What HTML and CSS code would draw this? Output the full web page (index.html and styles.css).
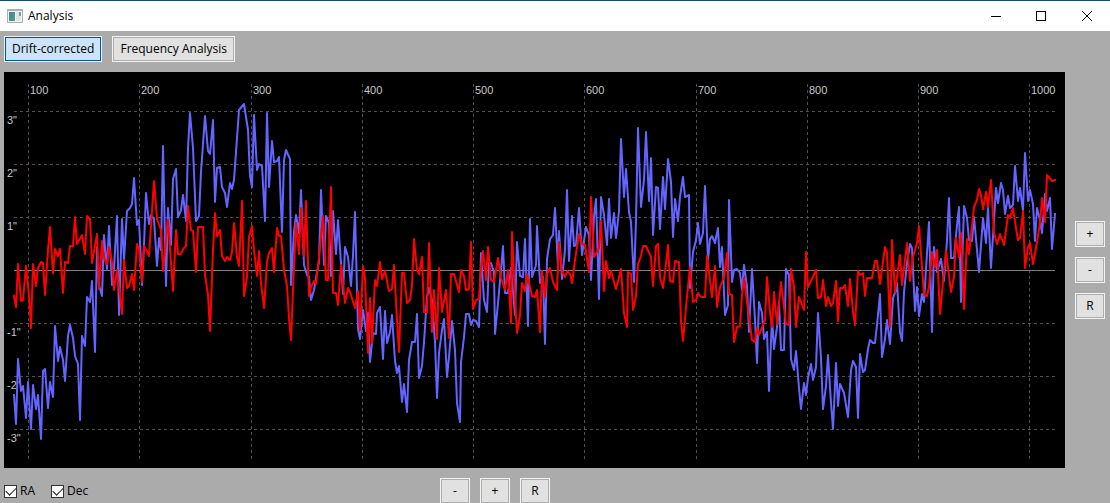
FILE: index.html
```html
<!DOCTYPE html>
<html lang="en">
<head>
<meta charset="utf-8">
<title>Analysis</title>
<link rel="stylesheet" href="styles.css">
</head>
<body>
<header class="titlebar">
  <svg class="app-icon" width="16" height="14" viewBox="0 0 16 14" shape-rendering="crispEdges" aria-hidden="true">
    <defs><linearGradient id="pane" x1="0" y1="0" x2="1" y2="1"><stop offset="0" stop-color="#4a7fb0"/><stop offset="1" stop-color="#4fa36b"/></linearGradient></defs>
    <rect x="0" y="0" width="16" height="14" fill="#a9b0b5"/>
    <rect x="1" y="2" width="14" height="11" fill="#f2f3f4"/>
    <rect x="2" y="3" width="6" height="9" fill="url(#pane)"/>
    <rect x="9" y="3" width="3" height="9" fill="#e0e2e5"/>
    <rect x="12" y="3" width="2" height="4" fill="#6aa58c"/>
    <rect x="12" y="7" width="2" height="5" fill="#dfe4e6"/>
  </svg>
  <h1 class="title">Analysis</h1>
  <div class="window-controls">
    <button class="win-btn" aria-label="Minimize"><svg width="12" height="12" viewBox="0 0 12 12" shape-rendering="crispEdges"><path d="M2 6.5h10"/></svg></button>
    <button class="win-btn" aria-label="Maximize"><svg width="12" height="12" viewBox="0 0 12 12" shape-rendering="crispEdges"><path d="M1.5 1.5h9v9h-9z"/></svg></button>
    <button class="win-btn" aria-label="Close"><svg width="12" height="12" viewBox="0 0 12 12"><path d="M1 1l10 10M11 1L1 11"/></svg></button>
  </div>
</header>
<nav class="modes">
  <button class="btn mode selected" aria-pressed="true">Drift-corrected</button>
  <button class="btn mode" aria-pressed="false">Frequency Analysis</button>
</nav>
<main class="workspace">
  <svg class="plot" viewBox="4 72 1061 396" role="img" aria-label="RA and Dec drift in arc-seconds">
    <path class="grid" d="M14 111.5H1055M14 164.5H1055M14 217.5H1055M14 323.5H1055M14 376.5H1055M14 429.5H1055"/>
    <path class="grid" d="M28.5 84V459M139.5 84V459M251.5 84V459M362.5 84V459M473.5 84V459M584.5 84V459M696.5 84V459M807.5 84V459M918.5 84V459M1029.5 84V459"/>
    <path class="axis" d="M14 270.5H1055"/>
    <g class="labels">
      <text x="30" y="94">100</text><text x="141" y="94">200</text><text x="253" y="94">300</text><text x="364" y="94">400</text><text x="475" y="94">500</text><text x="586" y="94">600</text><text x="698" y="94">700</text><text x="809" y="94">800</text><text x="920" y="94">900</text><text x="1031" y="94">1000</text>
      <text x="7" y="124">3"</text><text x="7" y="177">2"</text><text x="7" y="230">1"</text><text x="7" y="336">-1"</text><text x="7" y="389">-2"</text><text x="7" y="442">-3"</text>
    </g>
    <polyline class="trace ra" points="14,395 16,424 18,359 21,391 23,386 26,418 28,382 31,429 33,385 36,409 38,395 41,439 43,371 45,369 48,408 50,382 53,397 55,326 58,361 60,347 63,360 65,381 68,336 70,325 73,338 75,356 78,364 80,420 82,336 85,346 87,297 90,302 92,281 95,352 97,247 99,285 102,296 104,235 107,269 109,226 112,285 114,268 117,216 119,315 122,219 124,260 127,211 130,208 132,204 134,178 137,225 139,220 142,285 144,245 146,193 149,224 151,215 154,219 157,266 159,238 161,250 163,146 166,286 168,208 171,245 173,179 176,169 178,217 181,210 183,195 186,221 188,148 190,113 193,148 196,221 199,216 201,172 205,116 208,151 210,154 213,120 215,202 217,168 220,167 222,187 225,193 227,207 230,183 232,189 234,180 239,110 244,104 248,130 250,176 252,187 254,115 257,170 259,164 262,166 265,221 267,113 269,187 272,141 274,162 277,161 279,157 282,232 284,160 286,150 290,159 291,285 294,232 296,215 299,233 301,190 304,265 307,275 309,277 311,300 314,290 317,272 319,262 321,190 324,265 326,216 329,223 331,276 333,211 336,254 338,220 341,263 343,294 345,247 348,257 351,286 353,255 355,212 358,329 360,339 363,310 366,331 368,313 370,362 373,333 376,334 377,313 380,307 383,359 385,311 387,343 390,332 392,315 395,361 397,373 399,366 402,402 404,384 407,412 409,360 412,342 415,342 417,314 419,378 422,366 424,342 427,297 429,288 432,300 435,342 437,398 439,353 442,330 444,319 447,377 449,357 452,321 455,350 457,403 460,422 461,362 464,337 466,314 469,314 471,325 473,320 476,321 479,327 481,253 484,300 487,312 489,263 491,263 494,272 495,334 498,303 501,270 503,246 505,293 508,293 511,268 515,315 517,242 520,276 523,277 525,239 528,326 530,219 532,277 536,265 537,226 540,283 543,277 545,344 547,259 550,239 553,235 555,208 558,267 559,231 562,279 565,250 567,190 569,261 572,216 574,246 576,245 579,208 582,255 586,227 589,235 591,280 594,217 596,199 599,299 601,197 604,215 607,245 609,199 611,238 614,213 616,238 619,211 621,139 624,197 626,169 629,212 631,222 634,282 636,220 638,128 641,207 644,180 646,132 649,201 651,158 653,235 656,187 658,188 660,229 663,177 665,209 668,159 671,182 673,237 675,199 678,221 680,197 683,177 685,197 689,195 690,288 693,252 696,240 698,223 700,244 703,233 705,186 708,260 710,239 712,236 715,243 718,228 720,267 722,247 725,315 728,305 729,200 732,282 734,270 737,269 740,273 742,290 744,265 747,287 749,332 752,269 755,320 757,363 759,302 762,313 764,339 767,332 769,391 772,317 774,349 777,327 779,302 781,350 784,350 786,269 789,275 791,359 794,370 796,351 799,388 801,409 804,383 806,395 808,378 811,364 813,380 816,367 818,313 821,358 823,409 826,386 828,355 831,403 833,429 836,363 838,406 840,384 844,393 848,417 851,370 853,361 856,367 858,418 860,354 863,372 865,370 868,349 870,340 873,343 875,343 877,325 880,294 882,357 885,339 887,320 890,344 893,298 896,290 897,283 900,332 902,341 904,292 907,263 910,244 912,248 915,311 917,287 919,316 922,294 924,302 927,253 929,222 932,332 934,247 937,272 941,259 944,281 947,240 949,198 951,258 954,258 956,235 959,207 961,302 964,206 967,218 969,240 972,241 974,217 979,272 983,218 986,243 988,207 991,268 994,220 996,188 998,203 1001,183 1003,190 1005,214 1008,196 1010,208 1013,205 1015,166 1018,201 1020,188 1023,211 1025,153 1028,201 1030,190 1033,204 1035,241 1037,208 1040,220 1042,233 1045,194 1047,211 1050,198 1052,249 1055,214"/>
    <polyline class="trace dec" points="14,296 16,307 18,264 21,301 23,300 26,266 29,296 31,328 33,264 36,286 38,268 41,262 43,263 45,295 48,250 50,227 53,273 55,249 58,256 60,249 63,293 65,262 68,263 70,246 73,246 75,217 77,244 82,235 85,254 87,216 90,219 92,263 97,234 99,289 102,241 104,258 107,264 109,247 112,262 114,290 117,270 119,287 122,314 124,260 127,288 129,286 132,274 134,290 137,244 139,249 142,282 144,246 149,256 154,181 157,219 161,230 163,271 168,220 173,291 176,230 178,254 181,254 183,249 186,246 188,206 191,230 193,231 196,272 198,227 203,227 205,275 208,295 210,331 213,250 215,213 217,236 220,230 222,256 225,261 227,257 230,260 232,252 234,223 237,257 239,266 242,201 244,296 247,277 249,237 252,226 254,250 257,276 259,251 261,283 264,308 267,262 269,253 272,248 274,272 277,228 279,236 281,236 284,270 287,286 289,318 291,340 293,290 296,223 299,254 301,208 304,256 306,201 309,296 311,287 314,281 316,284 319,257 323,216 326,280 328,280 331,187 333,293 336,293 338,305 341,265 345,303 348,288 350,292 355,308 358,291 360,330 363,266 365,278 368,353 370,298 372,343 375,280 377,286 380,262 382,279 385,271 389,291 392,289 394,265 397,320 399,352 402,273 404,273 407,303 410,300 412,285 414,239 417,270 419,274 422,257 424,312 427,312 429,243 432,332 434,290 437,339 439,268 442,312 446,290 449,338 451,274 454,274 459,292 461,270 464,276 466,290 469,289 471,242 473,309 476,300 479,299 481,267 483,251 486,280 488,247 491,280 494,282 498,258 501,278 505,290 508,270 511,323 512,232 515,298 517,333 520,315 522,283 525,291 527,274 530,287 532,296 535,297 537,290 540,332 542,271 545,297 547,274 550,268 553,282 557,290 559,242 562,272 565,277 567,271 570,274 572,283 575,260 579,234 582,244 585,245 589,272 591,197 594,257 597,252 599,248 601,221 604,291 606,261 609,278 611,271 616,289 619,277 621,269 624,313 627,327 628,272 631,274 633,310 636,296 638,264 641,256 643,246 646,246 651,257 653,286 656,246 658,244 660,277 663,288 665,272 668,245 670,281 673,282 675,261 679,262 681,321 683,341 686,307 690,267 693,302 696,300 698,293 701,297 705,297 707,256 712,297 715,266 717,307 720,287 724,277 727,253 729,294 732,295 734,342 737,327 740,326 742,295 744,278 747,302 752,340 755,342 757,328 759,335 765,320 767,277 770,312 772,327 774,292 777,324 781,282 786,324 789,325 791,269 794,287 796,327 799,297 804,310 806,252 808,287 816,270 818,298 821,297 823,280 826,306 828,297 831,306 833,303 836,281 838,321 840,288 843,288 845,285 848,306 850,279 853,312 855,325 858,271 860,275 863,273 865,296 867,278 872,278 875,261 877,261 880,284 885,247 887,253 890,327 892,240 895,292 900,255 902,285 907,243 910,281 913,257 917,243 919,226 924,295 927,296 929,287 932,252 935,267 937,250 940,314 943,282 946,251 951,292 954,277 956,238 959,257 961,233 964,309 967,239 969,254 974,207 977,200 979,189 981,195 983,209 986,192 988,207 991,180 994,233 997,244 1000,234 1004,245 1008,215 1010,218 1013,208 1016,228 1018,240 1020,238 1023,211 1025,268 1028,247 1030,243 1033,264 1037,242 1040,223 1042,198 1045,222 1047,175 1052,181 1055,180"/>
  </svg>
  <div class="vertical-zoom" role="group" aria-label="Vertical zoom">
    <button class="btn square">+</button>
    <button class="btn square">-</button>
    <button class="btn square">R</button>
  </div>
</main>
<footer class="bottom">
  <div class="series">
    <label class="check"><input type="checkbox" checked>RA</label>
    <label class="check"><input type="checkbox" checked>Dec</label>
  </div>
  <div class="horizontal-zoom" role="group" aria-label="Horizontal zoom">
    <button class="btn square">-</button>
    <button class="btn square">+</button>
    <button class="btn square">R</button>
  </div>
</footer>
</body>
</html>
```
FILE: styles.css
```css
* { box-sizing: border-box; }
body {
  margin: 0;
  height: 100vh;
  overflow: hidden;
  display: flex;
  flex-direction: column;
  background: #ababab;
  color: #000;
  font: 12px/16px "Open Sans", "Noto Sans", sans-serif;
}
.titlebar {
  flex: none;
  display: flex;
  align-items: center;
  height: 31px;
  padding-left: 7px;
  background: #fff;
  border-top: 1px solid #1b4a70;
}
.title {
  margin: 0 0 0 5px;
  font-size: 12px;
  font-weight: 400;
}
.window-controls { display: flex; margin-left: auto; }
.win-btn {
  display: flex;
  align-items: center;
  justify-content: center;
  width: 46px;
  height: 30px;
  padding: 0;
  border: 0;
  background: none;
}
.win-btn path { fill: none; stroke: #000; stroke-width: 1; }
.modes {
  flex: none;
  display: flex;
  gap: 10px;
  padding: 5px 4px 10px;
}
.btn {
  padding: 0;
  font: inherit;
  color: #000;
  background: #e1e1e1;
  border: 1px solid #f2f2f2;
  box-shadow: inset 0 0 0 1px #adadad;
}
.mode { height: 26px; padding: 0 7px; }
.mode.selected {
  background: #cce4f7;
  box-shadow: inset 0 0 0 1px #005499;
}
.square { width: 30px; height: 26px; }
.workspace {
  flex: 1;
  min-height: 0;
  display: flex;
  gap: 10px;
  padding: 0 5px 0 4px;
}
.plot {
  flex: 1;
  min-width: 0;
  height: 100%;
  background: #000;
}
.grid {
  fill: none;
  stroke: #505050;
  stroke-dasharray: 3 3;
  shape-rendering: crispEdges;
}
.axis { stroke: #808080; shape-rendering: crispEdges; }
.labels { fill: #c8c8c8; font: 11px "Liberation Sans", sans-serif; }
.trace {
  fill: none;
  stroke-width: 2;
  stroke-linejoin: round;
  stroke-linecap: square;
}
.ra { stroke: #6464ff; }
.dec { stroke: #f00; }
.vertical-zoom {
  display: flex;
  flex-direction: column;
  justify-content: center;
  gap: 10px;
}
.bottom {
  flex: none;
  display: grid;
  grid-template-columns: 1fr auto 1fr;
  height: 35px;
  padding: 10px 124px 0 4px;
}
.series { display: flex; gap: 16px; align-items: center; }
.check { display: flex; align-items: center; gap: 3px; }
.check input {
  appearance: none;
  width: 13px;
  height: 13px;
  margin: 0;
  display: grid;
  place-items: center;
  background: #fff;
  border: 1px solid #333;
}
.check input:checked::before {
  content: "";
  width: 9px;
  height: 5px;
  border: solid #222;
  border-width: 0 0 1px 1px;
  transform: translateY(-1px) rotate(-45deg);
}
.horizontal-zoom { display: flex; gap: 10px; }
```
